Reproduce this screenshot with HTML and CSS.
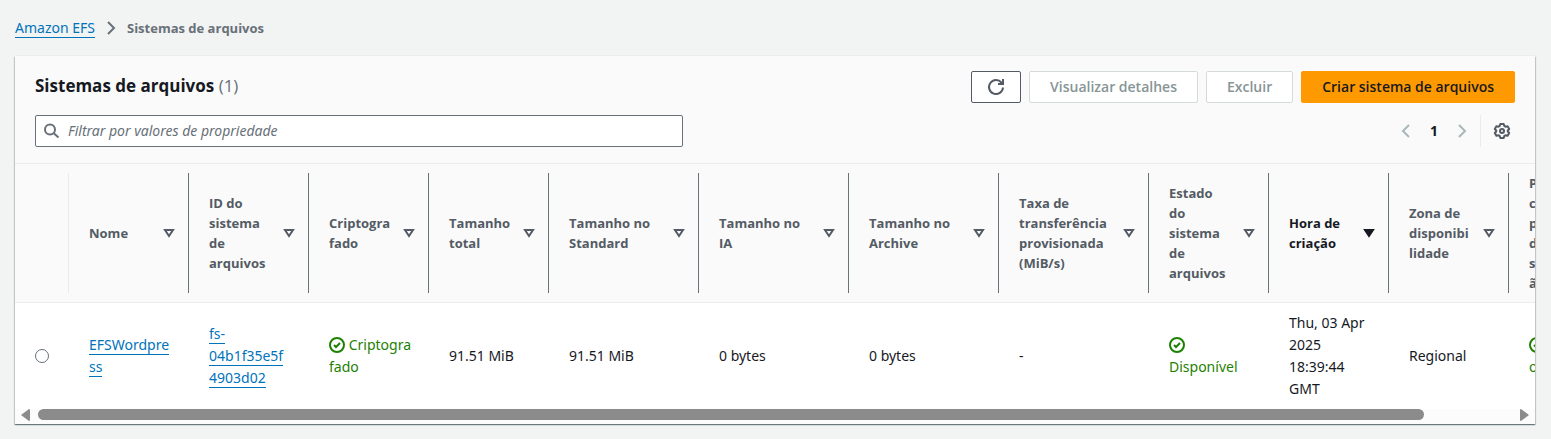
FILE: index.html
```html
<!DOCTYPE html>
<html lang="pt-BR">
<head>
<meta charset="utf-8">
<title>Sistemas de arquivos</title>
<link rel="stylesheet" href="styles.css">
</head>
<body>
<svg class="defs" aria-hidden="true">
  <symbol id="sort" viewBox="0 0 16 16"><path d="M4 5h8l-4 6z" fill="none" stroke="currentColor" stroke-width="2"/></symbol>
  <symbol id="sorted" viewBox="0 0 16 16"><path d="M4 5h8l-4 6z" fill="currentColor" stroke="currentColor" stroke-width="2"/></symbol>
  <symbol id="ok" viewBox="0 0 16 16"><g fill="none" stroke="currentColor" stroke-width="2"><circle cx="8" cy="8" r="7"/><path d="M5 8l2 2 4-4"/></g></symbol>
</svg>
<nav class="breadcrumbs" aria-label="Trilha">
  <a class="link" href="#">Amazon EFS</a>
  <svg class="icon" viewBox="0 0 16 16"><path d="M5 2l6 6-6 6" fill="none" stroke="currentColor" stroke-width="2"/></svg>
  <span class="current">Sistemas de arquivos</span>
</nav>
<main class="panel">
  <header class="panel-header">
    <div class="bar">
      <h1 class="title">Sistemas de arquivos <span class="count">(1)</span></h1>
      <div class="actions">
        <button class="button refresh" type="button" aria-label="Atualizar"><svg class="icon" viewBox="0 0 16 16"><g fill="none" stroke="currentColor" stroke-width="2"><path d="M15 8.500A7 7 0 1 1 13.500 3.700l1 1.300"/><path d="M15 0v5h-5"/></g></svg></button>
        <button class="button" type="button" disabled>Visualizar detalhes</button>
        <button class="button" type="button" disabled>Excluir</button>
        <button class="button primary" type="button">Criar sistema de arquivos</button>
      </div>
    </div>
    <div class="bar">
      <label class="filter">
        <svg class="icon" viewBox="0 0 16 16"><g fill="none" stroke="currentColor" stroke-width="2"><circle cx="6" cy="6.500" r="5"/><path d="M9.500 10l5 4.500"/></g></svg>
        <input class="filter-input" type="text" aria-label="Filtrar" placeholder="Filtrar por valores de propriedade">
      </label>
      <div class="tools">
        <div class="pages">
          <button class="plain" type="button" aria-label="Página anterior" disabled><svg class="icon" viewBox="0 0 16 16"><path d="M11 2L5 8l6 6" fill="none" stroke="currentColor" stroke-width="2"/></svg></button>
          <button class="plain page" type="button">1</button>
          <button class="plain" type="button" aria-label="Próxima página" disabled><svg class="icon" viewBox="0 0 16 16"><path d="M5 2l6 6-6 6" fill="none" stroke="currentColor" stroke-width="2"/></svg></button>
        </div>
        <button class="plain settings" type="button" aria-label="Preferências"><svg class="icon" viewBox="0 0 16 16"><g fill="none" stroke="currentColor" stroke-width="2" stroke-linejoin="round"><path d="M6.300 1h3.400l.6 2 1.300.7 2-.5 1.600 2.800L13.800 7.500v1l1.400 1.500-1.600 2.800-2-.5-1.300.7-.6 2H6.300l-.6-2-1.300-.7-2 .5L.8 10l1.400-1.500v-1L.8 6l1.600-2.800 2 .5L5.700 3z"/><circle cx="8" cy="8" r="2"/></g></svg></button>
      </div>
    </div>
  </header>
  <div class="table-wrap">
    <table class="table">
      <colgroup><col class="pick"><col class="narrow" span="4"><col class="wide" span="4"><col class="narrow" span="4"></colgroup>
      <thead>
        <tr>
          <th><div class="head light"></div></th>
          <th><div class="head">Nome<svg class="sort"><use href="#sort"/></svg></div></th>
          <th><div class="head">ID do<br>sistema<br>de<br>arquivos<svg class="sort"><use href="#sort"/></svg></div></th>
          <th><div class="head"><span>Criptogra<wbr>fado</span><svg class="sort"><use href="#sort"/></svg></div></th>
          <th><div class="head">Tamanho total<svg class="sort"><use href="#sort"/></svg></div></th>
          <th><div class="head"><span>Tamanho no<br>Standard</span><svg class="sort"><use href="#sort"/></svg></div></th>
          <th><div class="head"><span>Tamanho no<br>IA</span><svg class="sort"><use href="#sort"/></svg></div></th>
          <th><div class="head"><span>Tamanho no<br>Archive</span><svg class="sort"><use href="#sort"/></svg></div></th>
          <th><div class="head"><span>Taxa de<br>transferência provisionada (MiB/s)</span><svg class="sort"><use href="#sort"/></svg></div></th>
          <th><div class="head"><span>Estado<br>do<br>sistema<br>de<br>arquivos</span><svg class="sort"><use href="#sort"/></svg></div></th>
          <th aria-sort="descending"><div class="head active"><span>Hora de<br>criação</span><svg class="sort"><use href="#sorted"/></svg></div></th>
          <th><div class="head"><span>Zona de<br>disponibi<wbr>lidade</span><svg class="sort"><use href="#sort"/></svg></div></th>
          <th><div class="head"><span>P<br>c<br>p<br>d<br>s<br>ã</span></div></th>
        </tr>
      </thead>
      <tbody>
        <tr>
          <td><input class="radio" type="radio" name="fs" aria-label="EFSWordpress"></td>
          <td><a class="link" href="#">EFSWordpre<wbr>ss</a></td>
          <td><a class="link" href="#">fs-<wbr>04b1f35e5f<wbr>4903d02</a></td>
          <td class="ok"><svg class="icon"><use href="#ok"/></svg> Criptogra<wbr>fado</td>
          <td>91.51 MiB</td>
          <td>91.51 MiB</td>
          <td>0 bytes</td>
          <td>0 bytes</td>
          <td>-</td>
          <td class="ok"><svg class="icon"><use href="#ok"/></svg><br>Disponível</td>
          <td>Thu, 03 Apr 2025 18:39:44 GMT</td>
          <td>Regional</td>
          <td class="ok"><svg class="icon"><use href="#ok"/></svg><br>o</td>
        </tr>
      </tbody>
    </table>
  </div>
  <div class="scrollbar" aria-hidden="true">
    <svg class="arrow" viewBox="0 0 9 12"><path d="M9 1v10q0 1-1 1L0 6 8 0q1 0 1 1z" fill="currentColor"/></svg>
    <div class="track"><div class="thumb"></div></div>
    <svg class="arrow" viewBox="0 0 9 12"><path d="M0 1v10q0 1 1 1l8-6-8-6Q0 0 0 1z" fill="currentColor"/></svg>
  </div>
</main>
</body>
</html>
```
FILE: styles.css
```css
* { box-sizing: border-box; }
body {
  margin: 0;
  padding: 18px 16px 15px 15px;
  background: #f2f3f3;
  color: #16191f;
  font: 14px/22px "Noto Sans", sans-serif;
}
.defs { display: none; }
.icon { width: 16px; height: 16px; overflow: visible; flex: none; }
.link {
  color: #0073bb;
  text-decoration: none;
  border-bottom: 1px solid #0073bb;
}
.breadcrumbs {
  display: flex;
  align-items: center;
  gap: 8px;
  height: 20px;
  margin-bottom: 18px;
  line-height: 18px;
  color: #687078;
}
.current { font: 700 13px/20px "Open Sans", sans-serif; }
.panel {
  background: #fff;
  box-shadow: 0 1px 1px rgba(0, 28, 36, .4), 1px 1px 1px rgba(0, 28, 36, .15), -1px 1px 1px rgba(0, 28, 36, .15), 0 -1px 0 #eaeded;
}
.panel-header {
  display: flex;
  flex-direction: column;
  gap: 12px;
  padding: 15px 20px 16px;
  background: #fafafa;
  border-bottom: 1px solid #eaeded;
}
.bar { display: flex; justify-content: space-between; align-items: center; }
.title { margin: 0; padding-bottom: 2px; font: 700 17px/22px "Open Sans", sans-serif; }
.count { font-weight: 400; color: #687078; }
.actions { display: flex; gap: 8px; }
.button {
  height: 32px;
  padding: 0 20px;
  border: 1px solid #545b64;
  border-radius: 2px;
  background: #fff;
  color: #545b64;
  font: 600 14px/20px "Open Sans", sans-serif;
}
.button:disabled { color: #879596; border-color: #d5dbdb; }
.refresh { display: flex; align-items: center; justify-content: center; width: 50px; padding: 0; }
.primary { background: #ff9900; border-color: #ff9900; color: #16191f; }
.filter {
  display: flex;
  align-items: center;
  gap: 8px;
  width: 648px;
  height: 32px;
  padding: 0 8px;
  border: 1px solid #687078;
  border-radius: 2px;
  background: #fff;
  color: #687078;
}
.filter-input { flex: 1; border: 0; padding: 0; outline: 0; background: none; font: inherit; }
.filter-input::placeholder { color: #687078; font-style: italic; }
.tools, .pages { display: flex; align-items: center; }
.pages { gap: 12px; height: 32px; padding-right: 10px; border-right: 1px solid #eaeded; }
.plain { display: flex; align-items: center; justify-content: center; width: 16px; height: 22px; padding: 0; border: 0; background: none; color: #545b64; }
.plain:disabled { color: #aab7b8; }
.page { color: #16191f; font: 700 14px/22px "Open Sans", sans-serif; }
.settings { margin: 0 5px 0 13px; }
.table-wrap { overflow: hidden; }
.table { width: 1614px; table-layout: fixed; border-collapse: collapse; }
.pick { width: 54px; }
.narrow { width: 120px; }
.wide { width: 150px; }
th { padding: 9px 0; background: #fafafa; border-bottom: 1px solid #eaeded; text-align: left; }
.head {
  display: flex;
  align-items: center;
  justify-content: space-between;
  height: 120px;
  padding: 0 11px 0 20px;
  border-right: 1px solid #687078;
  color: #545b64;
  font: 700 13px/20px "Open Sans", sans-serif;
}
.light { border-color: #eaeded; }
.active { color: #16191f; }
.sort { flex: none; width: 16px; height: 16px; }
td { padding: 9px 16px 9px 20px; }
.ok { color: #1d8102; }
.ok .icon { vertical-align: -3px; }
.radio {
  display: block;
  appearance: none;
  width: 14px;
  height: 14px;
  margin: 0;
  border: 1px solid #687078;
  border-radius: 50%;
  background: #fff;
}
.scrollbar {
  display: flex;
  justify-content: space-between;
  gap: 8px;
  height: 15px;
  padding: 0 6px;
  background: #fcfcfc;
  color: #8b8b8b;
}
.arrow { width: 9px; height: 12px; }
.track { flex: 1; }
.thumb { width: 94%; height: 11px; border-radius: 6px; background: #8b8b8b; }
```
